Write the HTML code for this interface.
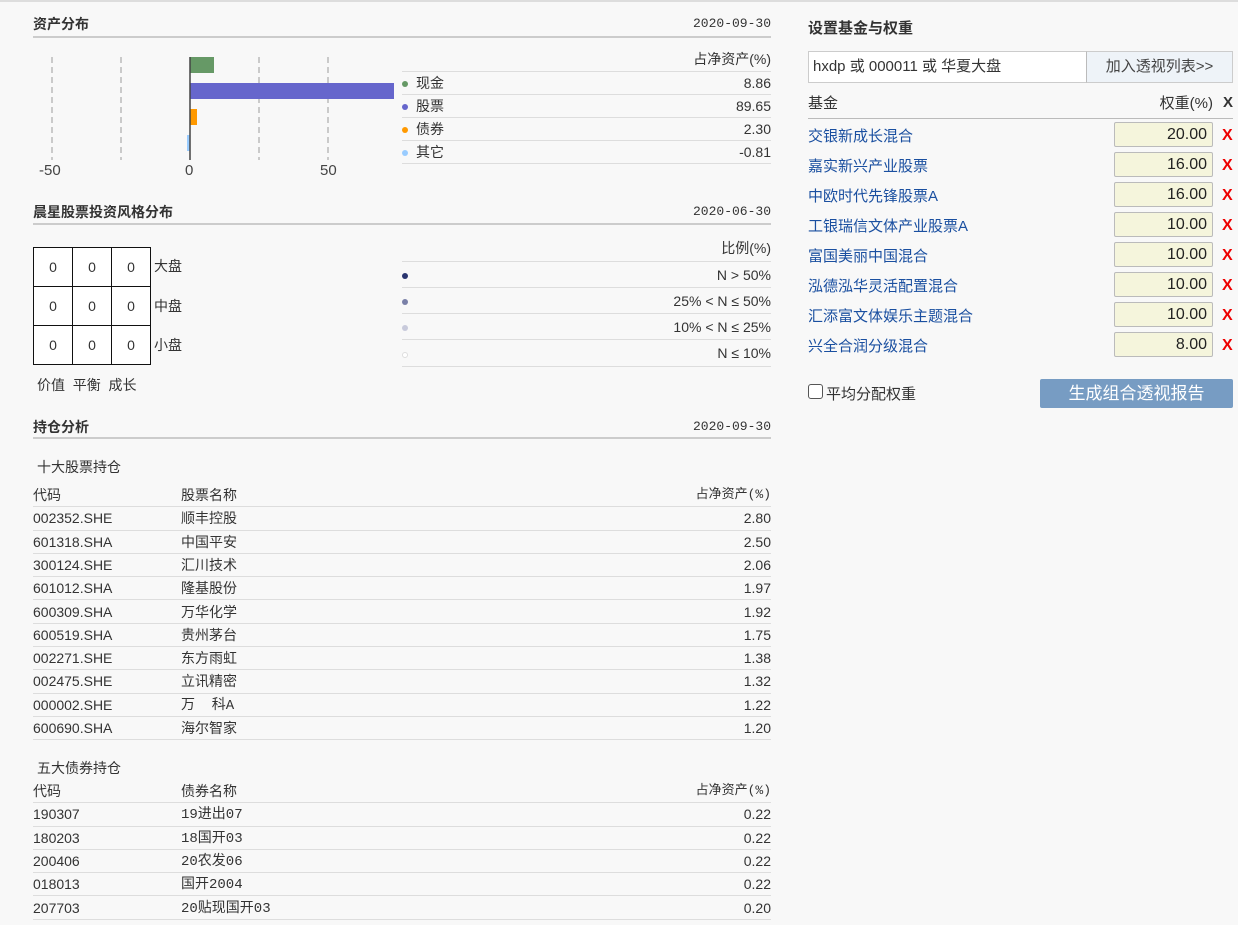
<!DOCTYPE html>
<html><head><meta charset="utf-8"><style>
*{margin:0;padding:0;box-sizing:border-box}
body{width:1238px;height:925px;background:#f8f8f8;font-family:"Liberation Sans","Noto Sans CJK SC",sans-serif;font-size:14px;color:#333;position:relative;overflow:hidden;border-top:2px solid #ddd}
.a{position:absolute;white-space:nowrap}
.h{font-weight:bold;font-size:14px;color:#333}
.d{font-size:13px;font-family:"Liberation Mono","Noto Sans CJK SC",monospace;color:#333}
.hl{position:absolute;left:33px;width:738px;height:2px;background:#ccc}
.row{position:absolute;left:0;width:100%;border-bottom:1px solid #ddd;line-height:22px;height:23.3px}
.r{position:absolute;right:0;top:0}
.nm{position:absolute;left:148px;top:0}
.mn{font-family:"Liberation Mono","Noto Sans CJK SC",monospace;font-size:14px;line-height:18px;top:3px}
.grid{position:absolute;left:33px;top:245px;border-collapse:collapse}
.grid td{border:1.5px solid #111;width:39px;height:39px;text-align:center;background:#fff}
.dot{display:inline-block;width:6px;height:6px;border-radius:50%;margin-right:8px;vertical-align:middle}
.fund{position:absolute;left:808px;width:425px;height:30px}
.fund .n{position:absolute;left:0;top:3px;color:#1a4fa0;font-size:15px}
.fund .v{position:absolute;left:306px;top:0;width:99px;height:25px;background:#f5f5dc;border:1px solid #bbb;border-radius:2px;text-align:right;padding-right:5px;font-size:16px;line-height:23px;color:#222}
.fund .x{position:absolute;left:414px;top:5px;color:#e00;font-weight:bold;font-size:16px}
</style></head><body>

<div class="a h" style="left:33px;top:12px">资产分布</div>
<div class="a d" style="right:467px;top:14px">2020-09-30</div>
<div class="hl" style="top:34px"></div>
<svg class="a" style="left:33px;top:50px" width="370" height="130">
<g stroke="#bbb" stroke-dasharray="6,4" stroke-width="1.5">
<line x1="19" y1="5" x2="19" y2="108"/><line x1="88" y1="5" x2="88" y2="108"/><line x1="226" y1="5" x2="226" y2="108"/><line x1="295" y1="5" x2="295" y2="108"/></g>
<rect x="157" y="5" width="24" height="16" fill="#669966"/>
<rect x="157" y="31" width="204" height="16" fill="#6666cc"/>
<rect x="157" y="57" width="7" height="16" fill="#ff9900"/>
<rect x="154" y="83" width="3" height="16" fill="#99ccff"/>
<line x1="157" y1="5" x2="157" y2="108" stroke="#444" stroke-width="1.5"/>
<g font-size="15" fill="#444" font-family="Liberation Sans"><text x="6" y="123">-50</text><text x="152" y="123">0</text><text x="287" y="123">50</text></g>
</svg>
<div class="a" style="left:402px;top:46px;width:369px;height:118px">
<div class="row" style="top:0;height:24px;text-align:right">占净资产(%)</div>
<div class="row" style="top:24px"><span class="dot" style="background:#669966"></span>现金<span class="r">8.86</span></div>
<div class="row" style="top:47px"><span class="dot" style="background:#6666cc"></span>股票<span class="r">89.65</span></div>
<div class="row" style="top:70px"><span class="dot" style="background:#ff9900"></span>债券<span class="r">2.30</span></div>
<div class="row" style="top:93px"><span class="dot" style="background:#99ccff"></span>其它<span class="r">-0.81</span></div>
</div>

<div class="a h" style="left:33px;top:200px">晨星股票投资风格分布</div>
<div class="a d" style="right:467px;top:202px">2020-06-30</div>
<div class="hl" style="top:221px"></div>
<table class="grid"><tr><td>0</td><td>0</td><td>0</td></tr><tr><td>0</td><td>0</td><td>0</td></tr><tr><td>0</td><td>0</td><td>0</td></tr></table>
<div class="a" style="left:154px;top:254px">大盘</div>
<div class="a" style="left:154px;top:294px">中盘</div>
<div class="a" style="left:154px;top:333px">小盘</div>
<div class="a" style="left:37px;top:373px">价值&nbsp;&nbsp;平衡&nbsp;&nbsp;成长</div>
<div class="a" style="left:402px;top:235px;width:369px;height:130px">
<div class="row" style="top:0;height:24.5px;text-align:right">比例(%)</div>
<div class="row" style="top:24.5px;height:26.3px;line-height:26px"><span class="dot" style="background:#2a3570"></span><span class="r" style="line-height:26px">N &gt; 50%</span></div>
<div class="row" style="top:50.8px;height:26.3px;line-height:26px"><span class="dot" style="background:#7a80a8"></span><span class="r" style="line-height:26px">25% &lt; N ≤ 50%</span></div>
<div class="row" style="top:77.1px;height:26.3px;line-height:26px"><span class="dot" style="background:#c8cadb"></span><span class="r" style="line-height:26px">10% &lt; N ≤ 25%</span></div>
<div class="row" style="top:103.4px;height:26.3px;line-height:26px"><span class="dot" style="border:1px solid #ddd;background:#fff"></span><span class="r" style="line-height:26px">N ≤ 10%</span></div>
</div>

<div class="a h" style="left:33px;top:415px">持仓分析</div>
<div class="a d" style="right:467px;top:417px">2020-09-30</div>
<div class="hl" style="top:435px"></div>
<div class="a" style="left:37px;top:455px">十大股票持仓</div>
<div class="a" style="left:33px;top:482px;width:738px;height:260px">
<div class="row" style="top:0">代码<span class="nm">股票名称</span><span class="r d" style="line-height:22px">占净资产(%)</span></div>
<div class="row" style="top:23.3px">002352.SHE<span class="nm">顺丰控股</span><span class="r">2.80</span></div>
<div class="row" style="top:46.6px">601318.SHA<span class="nm">中国平安</span><span class="r">2.50</span></div>
<div class="row" style="top:69.9px">300124.SHE<span class="nm">汇川技术</span><span class="r">2.06</span></div>
<div class="row" style="top:93.2px">601012.SHA<span class="nm">隆基股份</span><span class="r">1.97</span></div>
<div class="row" style="top:116.5px">600309.SHA<span class="nm">万华化学</span><span class="r">1.92</span></div>
<div class="row" style="top:139.8px">600519.SHA<span class="nm">贵州茅台</span><span class="r">1.75</span></div>
<div class="row" style="top:163.1px">002271.SHE<span class="nm">东方雨虹</span><span class="r">1.38</span></div>
<div class="row" style="top:186.4px">002475.SHE<span class="nm">立讯精密</span><span class="r">1.32</span></div>
<div class="row" style="top:209.7px">000002.SHE<span class="nm mn">万&nbsp;&nbsp;科A</span><span class="r">1.22</span></div>
<div class="row" style="top:233px">600690.SHA<span class="nm">海尔智家</span><span class="r">1.20</span></div>
</div>
<div class="a" style="left:37px;top:756px">五大债券持仓</div>
<div class="a" style="left:33px;top:778px;width:738px;height:145px">
<div class="row" style="top:0">代码<span class="nm">债券名称</span><span class="r d" style="line-height:22px">占净资产(%)</span></div>
<div class="row" style="top:23.3px">190307<span class="nm mn">19进出07</span><span class="r">0.22</span></div>
<div class="row" style="top:46.6px">180203<span class="nm mn">18国开03</span><span class="r">0.22</span></div>
<div class="row" style="top:69.9px">200406<span class="nm mn">20农发06</span><span class="r">0.22</span></div>
<div class="row" style="top:93.2px">018013<span class="nm mn">国开2004</span><span class="r">0.22</span></div>
<div class="row" style="top:116.5px">207703<span class="nm mn">20贴现国开03</span><span class="r">0.20</span></div>
</div>

<div class="a h" style="left:808px;top:15px;font-size:15px">设置基金与权重</div>
<div class="a" style="left:808px;top:49px;width:279px;height:32px;background:#fff;border:1px solid #ccc;padding-left:4px;line-height:30px;font-size:15px;color:#333">hxdp 或 000011 或 华夏大盘</div>
<div class="a" style="left:1086px;top:49px;width:147px;height:32px;background:#eef3f8;border:1px solid #ccc;border-left:1px solid #bbb;line-height:30px;text-align:center;font-size:15px;color:#444">加入透视列表&gt;&gt;</div>
<div class="a" style="left:808px;top:90px;width:425px;height:27px;border-bottom:1px solid #bbb;font-size:15px">基金<span class="a" style="right:20px">权重(%)</span><span class="a" style="right:0;top:2px;font-weight:bold">X</span></div>
<div class="fund" style="top:120px"><span class="n">交银新成长混合</span><span class="v">20.00</span><span class="x">X</span></div>
<div class="fund" style="top:150px"><span class="n">嘉实新兴产业股票</span><span class="v">16.00</span><span class="x">X</span></div>
<div class="fund" style="top:180px"><span class="n">中欧时代先锋股票A</span><span class="v">16.00</span><span class="x">X</span></div>
<div class="fund" style="top:210px"><span class="n">工银瑞信文体产业股票A</span><span class="v">10.00</span><span class="x">X</span></div>
<div class="fund" style="top:240px"><span class="n">富国美丽中国混合</span><span class="v">10.00</span><span class="x">X</span></div>
<div class="fund" style="top:270px"><span class="n">泓德泓华灵活配置混合</span><span class="v">10.00</span><span class="x">X</span></div>
<div class="fund" style="top:300px"><span class="n">汇添富文体娱乐主题混合</span><span class="v">10.00</span><span class="x">X</span></div>
<div class="fund" style="top:330px"><span class="n">兴全合润分级混合</span><span class="v">8.00</span><span class="x">X</span></div>
<div class="a" style="left:808px;top:382px;width:15px;height:15px;border:1px solid #555;border-radius:3px;background:#fff"></div>
<div class="a" style="left:826px;top:381px;font-size:15px">平均分配权重</div>
<div class="a" style="left:1040px;top:377px;width:193px;height:29px;background:#779cc3;border-radius:2px;color:#fff;text-align:center;line-height:29px;font-size:17px">生成组合透视报告</div>
</body></html>
